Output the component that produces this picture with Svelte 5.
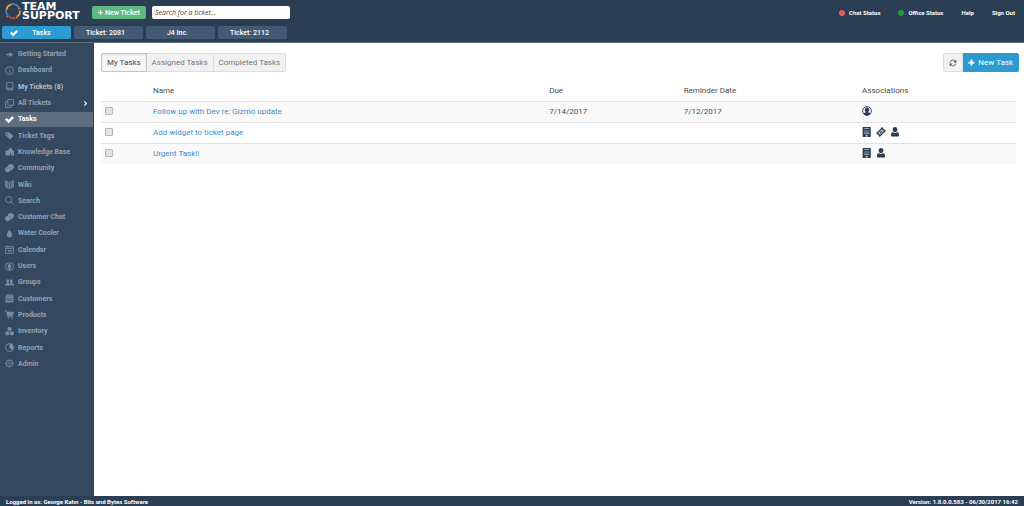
<script lang="ts">
  type Icon = { fill?: string; line?: string };

  const icons: Record<string, Icon> = {
    arrow: { fill: 'M2 6.5h6V3l6 5-6 5V9.5H2z' },
    info: { line: 'M8 1a7 7 0 1 1 0 14A7 7 0 0 1 8 1zM8 7v5M8 4v1.5' },
    inbox: { line: 'M3 1h11v13H3zM3 11h11M3 12.5h11' },
    copies: { line: 'M5 1h10v10H5zM5 5H1v10h10v-4' },
    check: { fill: 'M0 8.5 3 5.5 6.5 8.5 13 2 16 5 6.5 14.5z' },
    tag: { fill: 'M1 2h6l8 7-6 6-8-8zM3 4v2h2V4z' },
    home: { fill: 'M0 9 4 4.5V7l6-6 6 7v7h-5v-4H9v4H1V9z' },
    chat: { fill: 'M10 0c3.5 0 6 2 6 5 0 2-1.2 3.5-3 4.200V12l-3-2c.5-3-1.500-5-5.500-5C5 2 7 0 10 0zM5 5.500c3 0 5 2 5 4.500s-2 4-4.500 4L2.500 16v-2.500C1 12.800 0 11.500 0 10c0-2 2-4.500 5-4.500z' },
    book: { line: 'M8 4v11L1 12V1l4 2v10M8 4l3-1v10M8 15l7-3V1l-4 2M3 2v11M13 2v11' },
    search: { line: 'M6.5 1a5.5 5.5 0 1 1 0 11 5.5 5.5 0 0 1 0-11zM10.5 10.5l5 5' },
    drop: { fill: 'M8 1c2 4 4.5 6 4.5 9.5a4.5 4.5 0 0 1-9 0C3.500 7 6 5 8 1z' },
    calendar: { line: 'M1 3h14v12H1zM1 6h14M4 1v3M12 1v3M5 9h2v3H5M9 9h2v3H9z' },
    user: { line: 'M8 1a7 7 0 1 1 0 14A7 7 0 0 1 8 1z', fill: 'M8 2.500c2.200 0 3.500 1.300 3.500 3.500 0 1.500-.8 2.800-1.700 3.300v.5l4 1.700c-1.500 2.500-3.500 3.500-5.800 3.500s-4.300-1-5.800-3.500l4-1.700v-.5C5.300 8.800 4.500 7.500 4.500 6c0-2.200 1.300-3.500 3.500-3.500z' },
    info2: { line: 'M8 1a7 7 0 1 1 0 14A7 7 0 0 1 8 1z', fill: 'M8 2.5a1.5 1.5 0 0 1 1.200 2.400L11 6v4H9.800v4H6.200v-4H5V6l1.800-1.100A1.500 1.500 0 0 1 8 2.500z' },
    users: { fill: 'M5 2c2 0 2.5 1.5 2.5 3S7 7.500 6.500 8v1L10 11v2.500H0V11l3.500-2V8C3 7.500 2.500 6.500 2.500 5S3 2 5 2zM11 2c2 0 2.500 1.500 2.500 3s-.5 2.500-1 3v1l3.500 2v2.500h-5V10.500L9 9c-.5-2.500.2-3 0-6 .5-.7 1-1 2-1z' },
    store: { fill: 'M2 1h12v2H2zM1 4h14l1 3H0zM1 8h14v7H1zM3 10v2h10v-2z' },
    cart: { fill: 'M0 1h3l.6 2H16l-2 7H5.500l.3 1.200H14v1.300H4.500L2 2.500H0zM6 13a1.400 1.400 0 1 1 0 2.800A1.400 1.400 0 0 1 6 13zm6.500 0a1.400 1.400 0 1 1 0 2.800 1.400 1.400 0 0 1 0-2.800z' },
    cubes: { fill: 'M8 0l3.500 1.500v4L8 7 4.500 5.500v-4zM4 7.500l3.500 1.500v4.500L4 15 .5 13.500V9zM12 7.500 15.500 9v4.500L12 15l-3.500-1.500V9z' },
    pie: { line: 'M8 1a7 7 0 1 1 0 14A7 7 0 0 1 8 1z', fill: 'M8 1a7 7 0 0 1 5 12L8 8z' },
    gear: { line: 'M8 2.5a5.5 5.5 0 1 1 0 11 5.5 5.5 0 0 1 0-11zM8 6a2 2 0 1 1 0 4 2 2 0 0 1 0-4zM8 0v3M8 13v3M0 8h3M13 8h3M2.300 2.300l2 2M11.700 11.700l2 2M2.300 13.700l2-2M11.700 4.300l2-2' },
    building: { fill: 'M1 0h13v16H1zM3.500 2.500v.7h8v-.7zM3.500 5v.7h8V5zM3.500 7.500v.7h8v-.7zM3.500 10v.7h8V10zM6 13v2h3v-2z' },
    ticket: { fill: 'M10 0l2 2c-.5 1.5.5 2.500 2 2l2 2L6 16l-2-2c.5-1.500-.5-2.500-2-2l-2-2zM9.500 3.500l-6 6 3 3 6-6zM9.500 5l1.500 1.500-4.500 4.500L5 9.500z' },
    person: { fill: 'M8 0c2.500 0 3.800 1.700 3.800 4S10 8.500 8 8.500 4.200 6.300 4.200 4 5.500 0 8 0zM4.500 8c1 1 2 1.500 3.500 1.500s2.500-.5 3.500-1.500c2 .6 3 2 3 5 0 1.500-1 2-2 2h-9c-1 0-2-.5-2-2 0-3 1-4.400 3-5z' },
    refresh: { line: 'M2.500 7a5.500 5.500 0 0 1 10-2.500M13.500 9a5.500 5.500 0 0 1-10 2.500', fill: 'M14.500 1.500V7H9zM1.500 14.500V9H7z' },
    plus: { fill: 'M6 1h4v5h5v4h-5v5H6v-5H1V6h5z' },
    chevron: { fill: 'M3 2.500 5.500 0l8 8-8 8L3 13.500 8.500 8z' }
  };

  const menu = [
    { label: 'Getting Started', icon: 'arrow' },
    { label: 'Dashboard', icon: 'info' },
    { label: 'My Tickets (8)', icon: 'inbox', unread: true },
    { label: 'All Tickets', icon: 'copies', more: true },
    { label: 'Tasks', icon: 'check' },
    { label: 'Ticket Tags', icon: 'tag' },
    { label: 'Knowledge Base', icon: 'home' },
    { label: 'Community', icon: 'chat' },
    { label: 'Wiki', icon: 'book' },
    { label: 'Search', icon: 'search' },
    { label: 'Customer Chat', icon: 'chat' },
    { label: 'Water Cooler', icon: 'drop' },
    { label: 'Calendar', icon: 'calendar' },
    { label: 'Users', icon: 'info2' },
    { label: 'Groups', icon: 'users' },
    { label: 'Customers', icon: 'store' },
    { label: 'Products', icon: 'cart' },
    { label: 'Inventory', icon: 'cubes' },
    { label: 'Reports', icon: 'pie' },
    { label: 'Admin', icon: 'gear' }
  ];

  const openTabs = ['Tasks', 'Ticket: 2081', 'J4 Inc.', 'Ticket: 2112'];
  const filters = ['My Tasks', 'Assigned Tasks', 'Completed Tasks'];

  const tasks = [
    { name: 'Follow up with Dev re: Gizmo update', due: '7/14/2017', reminder: '7/12/2017', links: ['user'] },
    { name: 'Add widget to ticket page', due: '', reminder: '', links: ['building', 'ticket', 'person'] },
    { name: 'Urgent Task!!', due: '', reminder: '', links: ['building', 'person'] }
  ];

  let page = $state('Tasks');
  let filter = $state('My Tasks');
  let query = $state('');
</script>

{#snippet icon(name: string)}
  <svg class="icon" viewBox="0 0 16 16" aria-hidden="true">
    {#if icons[name].line}
      <path d={icons[name].line} fill="none" stroke="currentColor" stroke-width="1.5" />
    {/if}
    {#if icons[name].fill}
      <path d={icons[name].fill} fill="currentColor" fill-rule="evenodd" />
    {/if}
  </svg>
{/snippet}

<div class="app">
  <header>
    <div class="top">
      <a class="logo" href="#home">
        <svg viewBox="0 0 36 36" fill="none" stroke-width="3" aria-hidden="true">
          <path d="M5 14A14 14 0 0 1 14 5" stroke="#e8b84a" />
          <path d="M17 4a14 14 0 0 1 13 8" stroke="#3f8fd0" />
          <path d="M32 17a14 14 0 0 1-7 13" stroke="#f0b040" />
          <path d="M22 32a14 14 0 0 1-12-3" stroke="#d9503f" />
          <path d="M7 26a14 14 0 0 1-3-9" stroke="#3f8fd0" />
          <path d="M12 8l5-5M28 14l5-2M26 28l-2 5M9 27l-4 3M3 16l5-2" stroke="#e06a3c" />
        </svg>
        <span class="wordmark"><span>TEAM</span><span>SUPPORT</span></span>
      </a>
      <button class="new-ticket">{@render icon('plus')} New Ticket</button>
      <input class="search" type="text" placeholder="Search for a ticket..." aria-label="Search for a ticket" bind:value={query} />
      <nav class="status">
        <a href="#chat"><i class="dot red"></i>Chat Status</a>
        <a href="#office"><i class="dot green"></i>Office Status</a>
        <a href="#help">Help</a>
        <a href="#signout">Sign Out</a>
      </nav>
    </div>
    <div class="tabs">
      {#each openTabs as tab, i}
        <button class="tab" class:active={i === 0}>
          {#if i === 0}{@render icon('check')}{/if}
          <span>{tab}</span>
        </button>
      {/each}
    </div>
  </header>

  <div class="body">
    <aside>
      <nav class="menu">
        {#each menu as item}
          <a
            href="#{item.icon}"
            class:active={page === item.label}
            class:unread={item.unread}
            onclick={() => (page = item.label)}
          >
            {@render icon(item.icon)}
            <span>{item.label}</span>
            {#if item.more}<span class="more">{@render icon('chevron')}</span>{/if}
          </a>
        {/each}
      </nav>
    </aside>

    <main>
      <div class="toolbar">
        <div class="group">
          {#each filters as f}
            <button class:active={filter === f} onclick={() => (filter = f)}>{f}</button>
          {/each}
        </div>
        <div class="group">
          <button class="refresh" aria-label="Refresh">{@render icon('refresh')}</button>
          <button class="primary">{@render icon('plus')} New Task</button>
        </div>
      </div>

      <table>
        <thead>
          <tr>
            <th class="col-check"></th>
            <th class="col-name">Name</th>
            <th class="col-due">Due</th>
            <th class="col-reminder">Reminder Date</th>
            <th>Associations</th>
          </tr>
        </thead>
        <tbody>
          {#each tasks as task}
            <tr>
              <td><input type="checkbox" aria-label={task.name} /></td>
              <td><a href="#task">{task.name}</a></td>
              <td>{task.due}</td>
              <td>{task.reminder}</td>
              <td>
                <div class="links">
                  {#each task.links as link}{@render icon(link)}{/each}
                </div>
              </td>
            </tr>
          {/each}
        </tbody>
      </table>
    </main>
  </div>

  <footer>
    <span>Logged in as: George Kahn - Bits and Bytes Software</span>
    <span>Version: 1.8.0.0.583 - 06/30/2017 16:42</span>
  </footer>
</div>

<style>
  :global(body) {
    margin: 0;
  }

  .app {
    display: flex;
    flex-direction: column;
    min-height: 100vh;
    font-family: Roboto, 'Liberation Sans', sans-serif;
    font-size: 7px;
    color: #4a4d50;
    background: #fff;
  }

  .app * {
    box-sizing: border-box;
  }

  a {
    color: inherit;
    text-decoration: none;
  }

  button {
    font: inherit;
    color: inherit;
    border: 0;
    padding: 0;
    cursor: pointer;
  }

  .icon {
    width: 8px;
    height: 8px;
    flex: none;
  }

  header {
    background: #2b3e54;
    border-bottom: 1px solid #5f6f80;
    color: #fff;
  }

  .top {
    display: flex;
    align-items: center;
    height: 25px;
    padding: 0 9px 0 4px;
  }

  .logo {
    display: flex;
    align-items: center;
    width: 88px;
    height: 22px;
    align-self: flex-start;
    font: bold 11px/9px 'DejaVu Sans', sans-serif;
  }

  .logo svg {
    width: 18px;
    height: 18px;
    flex: none;
  }

  .wordmark {
    display: flex;
    flex-direction: column;
  }

  .new-ticket {
    display: flex;
    align-items: center;
    justify-content: center;
    gap: 2px;
    width: 54px;
    height: 13px;
    border-radius: 2px;
    background: #5fb881;
    font-weight: 500;
  }

  .new-ticket .icon {
    width: 5px;
    height: 5px;
  }

  .search {
    width: 138px;
    height: 13px;
    margin-left: 6px;
    padding: 0 3px;
    border: 0;
    border-radius: 2px;
    background: #fff;
    font: italic 7px 'Open Sans', sans-serif;
  }

  .search::placeholder {
    color: #444;
    opacity: 1;
  }

  .status {
    display: flex;
    gap: 18px;
    margin-left: auto;
    font-weight: 700;
    font-size: 6px;
  }

  .status a {
    display: flex;
    align-items: center;
  }

  .dot {
    width: 6px;
    height: 6px;
    margin-right: 4px;
    border-radius: 50%;
  }

  .red {
    background: #f0575f;
  }

  .green {
    background: #259b3f;
  }

  .tabs {
    display: flex;
    gap: 3px;
    padding: 1px 2px 3px;
  }

  .tab {
    width: 69px;
    height: 13px;
    padding-right: 6px;
    border-radius: 2px;
    background: #435a75;
    font-weight: 500;
  }

  .tab.active {
    display: flex;
    align-items: center;
    padding-left: 8px;
    background: #2b9bd1;
  }

  .tab.active span {
    flex: 1;
  }

  .body {
    display: flex;
    flex: 1;
  }

  aside {
    flex: none;
    width: 94px;
    padding-top: 4px;
    background: #34495f;
    border-right: 1px solid #2b3e54;
    color: #91a1b3;
  }

  .menu {
    display: grid;
    grid-auto-rows: 1fr;
    gap: 2px;
    height: 324px;
    font-weight: 700;
  }

  .menu a {
    display: flex;
    align-items: center;
    gap: 4px;
    padding: 0 5px;
  }

  .menu .icon {
    width: 9px;
    height: 9px;
    color: #7590ab;
  }

  .menu .unread {
    color: #b3bfcc;
  }

  .menu .active {
    background: #5d6e7e;
    color: #fff;
  }

  .menu .active .icon {
    color: #fff;
  }

  .more {
    display: flex;
    margin-left: auto;
  }

  .menu .more .icon {
    width: 5px;
    height: 5px;
    color: #fff;
  }

  main {
    flex: 1;
    padding: 10px 5px 0 7px;
  }

  .toolbar {
    display: flex;
    justify-content: space-between;
  }

  .group {
    display: flex;
    height: 19px;
    font-size: 8px;
  }

  .group button {
    display: flex;
    align-items: center;
    justify-content: center;
    gap: 3px;
    padding: 0 5px;
    background: #f1f1f1;
    border: 1px solid #ddd;
    border-left-width: 0;
    color: #777;
  }

  .group button:first-child {
    border-left-width: 1px;
    border-radius: 2px 0 0 2px;
  }

  .group button:last-child {
    border-radius: 0 2px 2px 0;
  }

  .group button.active {
    background: #f6f6f6;
    border-color: #c4c4c4;
    box-shadow: inset 0 1px 2px #ddd;
    color: #444;
  }

  .group .refresh {
    width: 20px;
    color: #444;
  }

  .group .primary {
    background: #2b9bd1;
    border-color: #2b9bd1;
    color: #fff;
  }

  .group .primary .icon {
    width: 7px;
    height: 7px;
  }

  table {
    width: calc(100% - 3px);
    margin-top: 10px;
    border-collapse: collapse;
    table-layout: fixed;
  }

  th,
  td {
    height: 21px;
    padding: 0 4px 1px;
    text-align: left;
    font-weight: 400;
    font-size: 8px;
    border-top: 1px solid #e3e3e3;
  }

  th {
    height: 19px;
    border-top: 0;
  }

  tbody tr:nth-child(odd) {
    background: #f9f9f9;
  }

  td a {
    color: #428bca;
  }

  .col-check {
    width: 48px;
  }

  .col-name {
    width: 43.3%;
  }

  .col-due {
    width: 14.7%;
  }

  .col-reminder {
    width: 19.5%;
  }

  td input {
    display: block;
    appearance: none;
    width: 8px;
    height: 8px;
    margin: 0;
    border: 1px solid #b5b5b5;
    border-radius: 1px;
    background: #e4e4e4;
  }

  td input:checked {
    background: #428bca;
  }

  .links {
    display: flex;
    gap: 4px;
    color: #2b3e54;
  }

  .links .icon {
    width: 10px;
    height: 10px;
  }

  footer {
    display: flex;
    align-items: center;
    justify-content: space-between;
    height: 10px;
    padding: 0 6px;
    background: #2b3e54;
    color: #fff;
    font-size: 6px;
    font-weight: 700;
  }
</style>
